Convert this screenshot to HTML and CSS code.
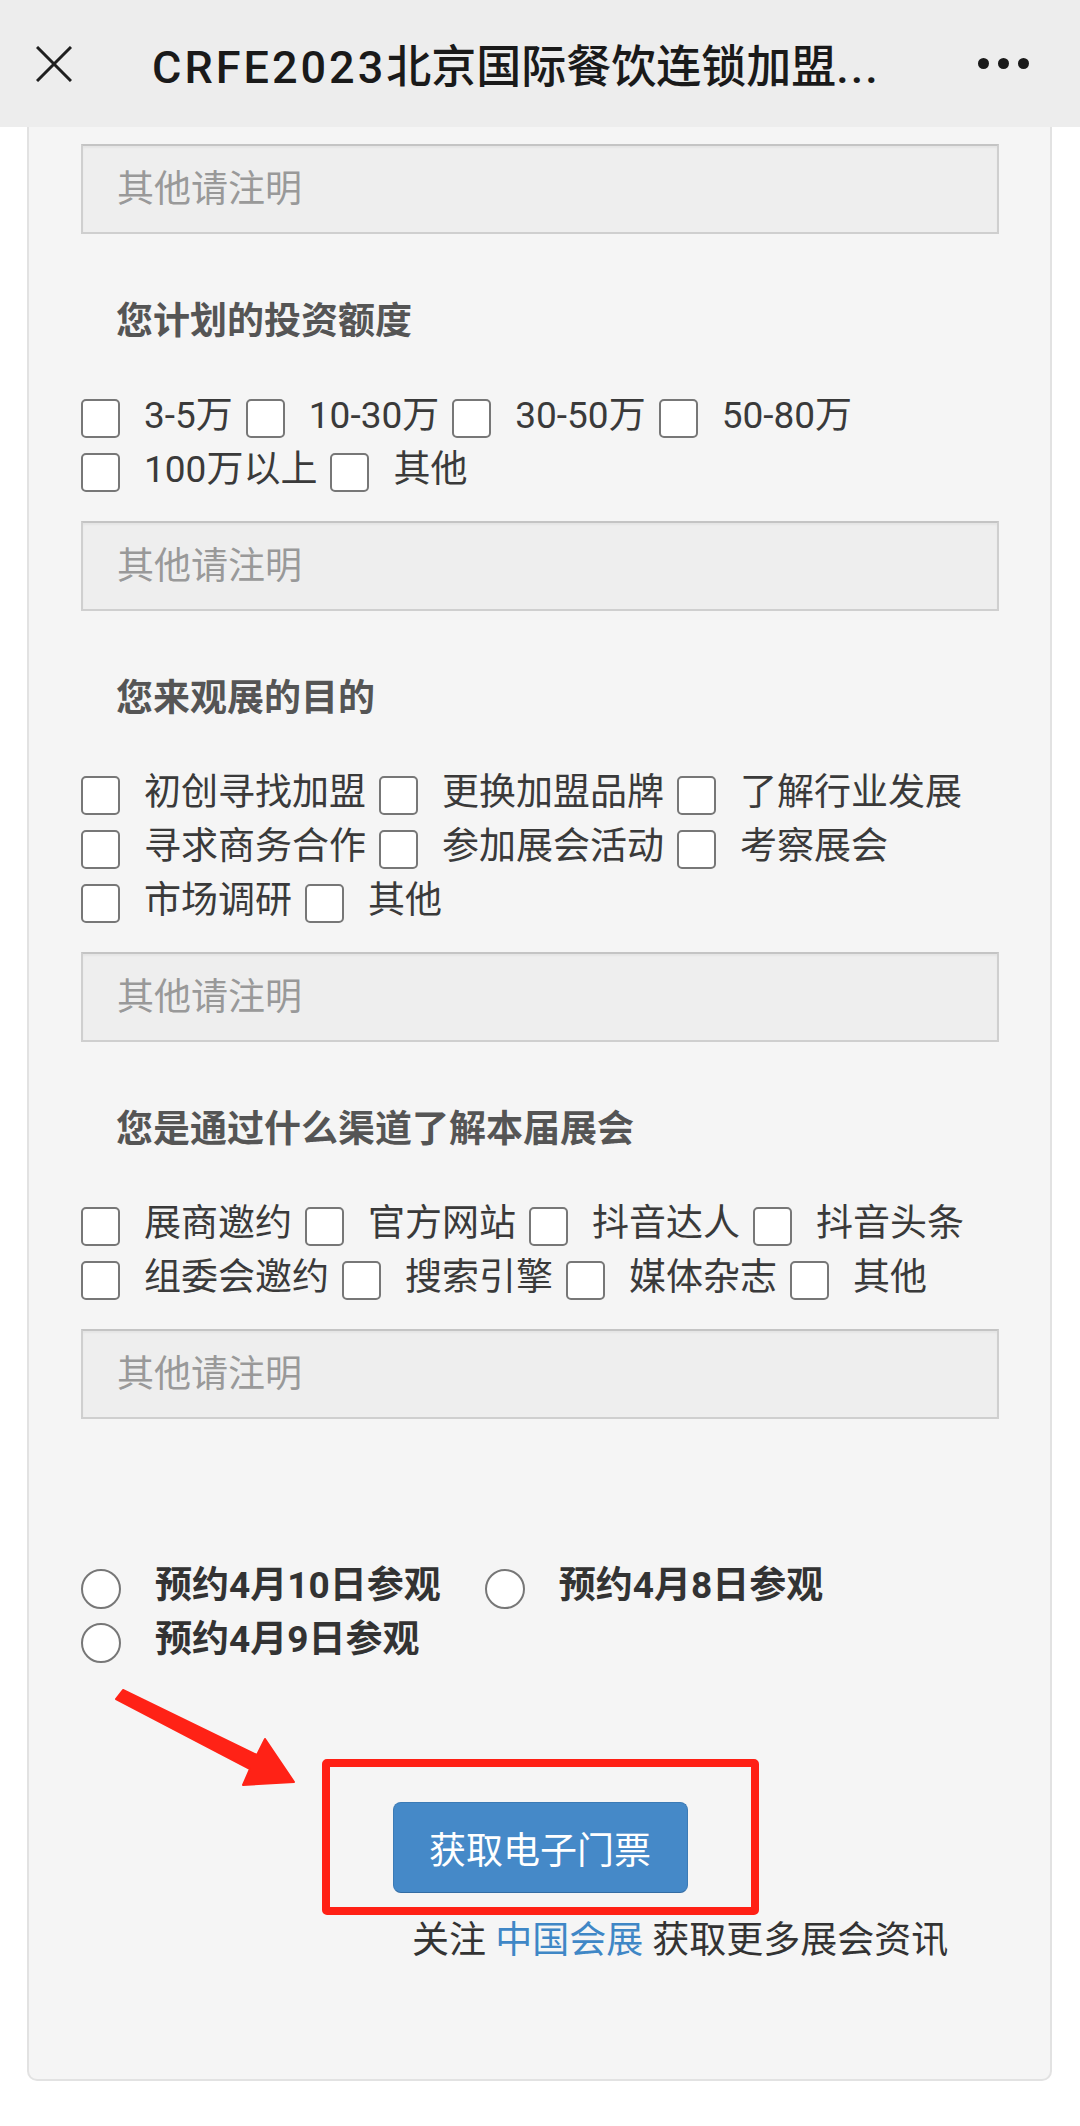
FILE: index.html
```html
<!DOCTYPE html>
<html lang="zh-CN">
<head>
    <meta charset="UTF-8">
    <meta name="viewport" content="width=device-width, initial-scale=1.0">
    <title>CRFE2023北京国际餐饮连锁加盟展</title>
    <link rel="stylesheet" href="styles.css">
</head>
<body>
    <header class="topbar">
        <svg class="close-icon" viewBox="0 0 36 36" width="36" height="36">
            <path d="M1 1 L35 35 M35 1 L1 35" stroke="#1f1f1f" stroke-width="3" fill="none"/>
        </svg>
        <div class="topbar-title"><span class="latin">CRFE2023</span>北京国际餐饮连锁加盟<span class="ellipsis">...</span></div>
        <div class="more">
            <span class="dot"></span><span class="dot"></span><span class="dot"></span>
        </div>
    </header>

    <main class="card">
        <input class="other-input" type="text" placeholder="其他请注明">

        <section class="question">
            <h3 class="q-title">您计划的投资额度</h3>
            <div class="options">
                <label class="opt"><input type="checkbox">3-5万</label>
                <label class="opt"><input type="checkbox">10-30万</label>
                <label class="opt"><input type="checkbox">30-50万</label>
                <label class="opt"><input type="checkbox">50-80万</label>
                <label class="opt"><input type="checkbox">100万以上</label>
                <label class="opt"><input type="checkbox">其他</label>
            </div>
            <input class="other-input" type="text" placeholder="其他请注明">
        </section>

        <section class="question">
            <h3 class="q-title">您来观展的目的</h3>
            <div class="options">
                <label class="opt"><input type="checkbox">初创寻找加盟</label>
                <label class="opt"><input type="checkbox">更换加盟品牌</label>
                <label class="opt"><input type="checkbox">了解行业发展</label>
                <label class="opt"><input type="checkbox">寻求商务合作</label>
                <label class="opt"><input type="checkbox">参加展会活动</label>
                <label class="opt"><input type="checkbox">考察展会</label>
                <label class="opt"><input type="checkbox">市场调研</label>
                <label class="opt"><input type="checkbox">其他</label>
            </div>
            <input class="other-input" type="text" placeholder="其他请注明">
        </section>

        <section class="question">
            <h3 class="q-title">您是通过什么渠道了解本届展会</h3>
            <div class="options">
                <label class="opt"><input type="checkbox">展商邀约</label>
                <label class="opt"><input type="checkbox">官方网站</label>
                <label class="opt"><input type="checkbox">抖音达人</label>
                <label class="opt"><input type="checkbox">抖音头条</label>
                <label class="opt"><input type="checkbox">组委会邀约</label>
                <label class="opt"><input type="checkbox">搜索引擎</label>
                <label class="opt"><input type="checkbox">媒体杂志</label>
                <label class="opt"><input type="checkbox">其他</label>
            </div>
            <input class="other-input" type="text" placeholder="其他请注明">
        </section>

        <div class="dates">
            <label class="date-opt"><input type="radio" name="visit">预约4月10日参观</label>
            <label class="date-opt"><input type="radio" name="visit">预约4月8日参观</label>
            <label class="date-opt"><input type="radio" name="visit">预约4月9日参观</label>
        </div>

        <div class="submit">
            <div class="ticket-wrap">
                <!-- annotation drawn over the screenshot -->
                <svg class="mark-arrow" viewBox="0 0 190 100" width="190" height="100">
                    <polygon points="10,3 144,68 152,52 181,95 130,98 137,82 3,12" fill="#ff2216" stroke="#ff2216" stroke-width="2" stroke-linejoin="round"/>
                </svg>
                <span class="mark-frame"></span>
                <button class="ticket-btn" type="button">获取电子门票</button>
            </div>
        </div>

        <p class="follow">关注 <a href="#">中国会展</a> 获取更多展会资讯</p>
    </main>
</body>
</html>
```

FILE: styles.css
```css
* {
    margin: 0;
    padding: 0;
    box-sizing: border-box;
}

body {
    font-family: Roboto, "Noto Sans CJK SC", sans-serif;
    font-size: 37px;
    color: #333;
    background-color: #fff;
}

.topbar {
    display: flex;
    align-items: center;
    height: 127px;
    padding: 0 51px 0 36px;
    background-color: #ededed;
}

.close-icon {
    flex-shrink: 0;
}

.topbar-title {
    flex: 1;
    margin-left: 80px;
    font-size: 45px;
    font-weight: 500;
    color: #1a1a1a;
    white-space: nowrap;
}

.topbar-title .latin {
    letter-spacing: 3px;
}

.topbar-title .ellipsis {
    letter-spacing: 2px;
}

.more {
    display: flex;
    gap: 9px;
}

.dot {
    width: 11px;
    height: 11px;
    border-radius: 50%;
    background-color: #1a1a1a;
}

.card {
    margin: 0 28px 0 27px;
    padding: 17px 51px 111px 52px;
    background-color: #f5f5f5;
    border: 2px solid #e2e2e2;
    border-top: none;
    border-radius: 0 0 10px 10px;
}

.other-input {
    display: block;
    width: 100%;
    height: 90px;
    padding: 0 34px;
    font-family: inherit;
    font-size: 37px;
    color: #333;
    background-color: #eee;
    border: 2px solid #cfcfcf;
    border-top-color: #c4c4c4;
    border-radius: 0;
    box-shadow: inset 0 2px 2px rgba(0, 0, 0, 0.04);
    outline: none;
}

.other-input::placeholder {
    color: #999;
}

.question {
    margin-top: 61px;
}

.q-title {
    padding-left: 35px;
    font-size: 37px;
    line-height: 54px;
    font-weight: 700;
    color: #555;
}

.options {
    display: flex;
    flex-wrap: wrap;
    margin-top: 36px;
}

.opt {
    display: inline-flex;
    align-items: center;
    height: 54px;
    margin-right: 13px;
    color: #3a3a3a;
    white-space: nowrap;
}

.opt input {
    appearance: none;
    -webkit-appearance: none;
    width: 39px;
    height: 39px;
    margin: 13px 24px 0 0;
    background-color: #fff;
    border: 2px solid #777;
    border-radius: 5px;
}

.question .other-input {
    margin-top: 28px;
}

.dates {
    display: flex;
    flex-wrap: wrap;
    margin-top: 136px;
}

.date-opt {
    display: inline-flex;
    align-items: center;
    height: 54px;
    margin-right: 44px;
    font-weight: 700;
    color: #333;
    white-space: nowrap;
}

.date-opt input {
    appearance: none;
    -webkit-appearance: none;
    width: 40px;
    height: 40px;
    margin: 14px 34px 0 0;
    background-color: #fff;
    border: 2px solid #777;
    border-radius: 50%;
}

.submit {
    display: flex;
    justify-content: center;
    margin-top: 139px;
}

.ticket-wrap {
    position: relative;
}

.ticket-btn {
    display: block;
    width: 295px;
    height: 91px;
    font-family: inherit;
    font-size: 37px;
    color: #fff;
    background-color: #4589c8;
    border: 1px solid #3b7bb6;
    border-bottom-color: #336ca3;
    border-radius: 8px;
}

.mark-frame {
    position: absolute;
    top: -43px;
    left: -71px;
    right: -71px;
    bottom: -22px;
    border: 8px solid #ff2015;
    border-radius: 5px;
    pointer-events: none;
}

.mark-arrow {
    position: absolute;
    left: -280px;
    top: -115px;
}

.follow {
    margin-top: 21px;
    padding-left: 331px;
    line-height: 54px;
    color: #333;
    white-space: nowrap;
}

.follow a {
    color: #3f87c6;
    text-decoration: none;
}
```
